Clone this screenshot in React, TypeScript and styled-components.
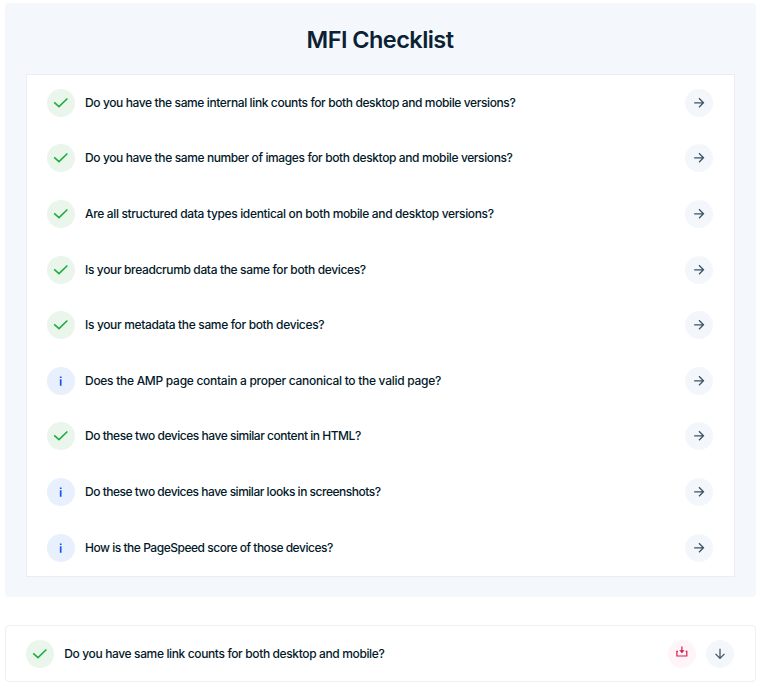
import React from "react";
import styled, { createGlobalStyle } from "styled-components";

const GlobalStyle = createGlobalStyle`
  * { box-sizing: border-box; }
  body { margin: 0; background: #fff; font-family: Inter, "Liberation Sans", sans-serif; color: #03192a; }
`;

const Page = styled.main`
  width: 760px;
  height: 694px;
  padding: 3px 4px 0 5px;
  overflow: hidden;
`;

const Panel = styled.section`
  height: 594px;
  padding: 0 21px;
  border-radius: 4px;
  background: #f4f8fd;
`;

const Title = styled.h1`
  margin: 0;
  height: 71px;
  line-height: 73px;
  text-align: center;
  font-size: 23.5px;
  font-weight: 600;
  letter-spacing: -0.55px;
  text-indent: -1px;
  color: #0a2233;
`;

const List = styled.ul`
  display: grid;
  grid-template-rows: repeat(9, 55.6px);
  height: 503px;
  margin: 0;
  padding: 0.1px 21px 0 20px;
  list-style: none;
  border: 1px solid #e9eef2;
  background: #fff;
`;

const Row = styled.li`
  display: flex;
  align-items: center;
`;

const Card = styled.section`
  display: flex;
  align-items: center;
  height: 57px;
  margin-top: 28px;
  padding: 0 21px 0 20.3px;
  border: 1px solid #edeff2;
  border-radius: 4px;
`;

const Question = styled.span<{ $tracking: number }>`
  flex: 1;
  margin-left: 10px;
  font-size: 12px;
  font-weight: 500;
  line-height: 18px;
  white-space: nowrap;
  letter-spacing: ${(p) => p.$tracking}px;
`;

const tones = {
  check: ["#eaf6ec", "#1fae3d"],
  info: ["#e7f0fc", "#1557ee"],
  neutral: ["#f3f7fc", "#3b5364"],
  danger: ["#fff4f7", "#d91c50"],
};

const Circle = styled.span<{ $tone: keyof typeof tones }>`
  display: grid;
  place-items: center;
  flex: none;
  width: 28px;
  height: 28px;
  border-radius: 50%;
  background: ${(p) => tones[p.$tone][0]};
  color: ${(p) => tones[p.$tone][1]};
  & + & { margin-left: 10px; }
`;

const Icon = styled.svg`
  display: block;
  width: 28px;
  height: 28px;
  fill: none;
  stroke: currentColor;
`;

const Status = ({ kind }: { kind: "check" | "info" }) => (
  <Circle $tone={kind}>
    <Icon viewBox="0 0 28 28">
      {kind === "check" ? (
        <path d="M7.2 13.3 12 17.6 20.4 9.5" strokeWidth="1.6" />
      ) : (
        <path d="M13.7 9.4v1.6M13.7 12.2v6.5" strokeWidth="1.7" />
      )}
    </Icon>
  </Circle>
);

const ArrowRight = () => (
  <Circle $tone="neutral">
    <Icon viewBox="0 0 28 28">
      <path d="M9.2 13.8h9.2M14 9.3l4.5 4.5-4.5 4.5" strokeWidth="1.25" />
    </Icon>
  </Circle>
);

const items: { kind: "check" | "info"; text: string; tracking: number }[] = [
  { kind: "check", text: "Do you have the same internal link counts for both desktop and mobile versions?", tracking: -0.388 },
  { kind: "check", text: "Do you have the same number of images for both desktop and mobile versions?", tracking: -0.384 },
  { kind: "check", text: "Are all structured data types identical on both mobile and desktop versions?", tracking: -0.35 },
  { kind: "check", text: "Is your breadcrumb data the same for both devices?", tracking: -0.36 },
  { kind: "check", text: "Is your metadata the same for both devices?", tracking: -0.346 },
  { kind: "info", text: "Does the AMP page contain a proper canonical to the valid page?", tracking: -0.284 },
  { kind: "check", text: "Do these two devices have similar content in HTML?", tracking: -0.47 },
  { kind: "info", text: "Do these two devices have similar looks in screenshots?", tracking: -0.484 },
  { kind: "info", text: "How is the PageSpeed score of those devices?", tracking: -0.475 },
];

export default function App() {
  return (
    <>
      <GlobalStyle />
      <Page>
        <Panel>
          <Title>MFI Checklist</Title>
          <List>
            {items.map((item) => (
              <Row key={item.text}>
                <Status kind={item.kind} />
                <Question $tracking={item.tracking}>{item.text}</Question>
                <ArrowRight />
              </Row>
            ))}
          </List>
        </Panel>
        <Card>
          <Status kind="check" />
          <Question $tracking={-0.37}>Do you have same link counts for both desktop and mobile?</Question>
          <Circle $tone="danger">
            <Icon viewBox="0 0 28 28">
              <path d="M10 11.4H8.9V16h9.9v-4.6h-1.1M13.9 6.6v6" strokeWidth="1.2" />
              <path d="M11.8 10.5h4.2l-2.1 2.3z" fill="currentColor" strokeWidth="0.6" />
            </Icon>
          </Circle>
          <Circle $tone="neutral">
            <Icon viewBox="0 0 28 28">
              <path d="M14 8.7v9.6M9.5 13.9l4.5 4.5 4.5-4.5" strokeWidth="1.25" />
            </Icon>
          </Circle>
        </Card>
      </Page>
    </>
  );
}
